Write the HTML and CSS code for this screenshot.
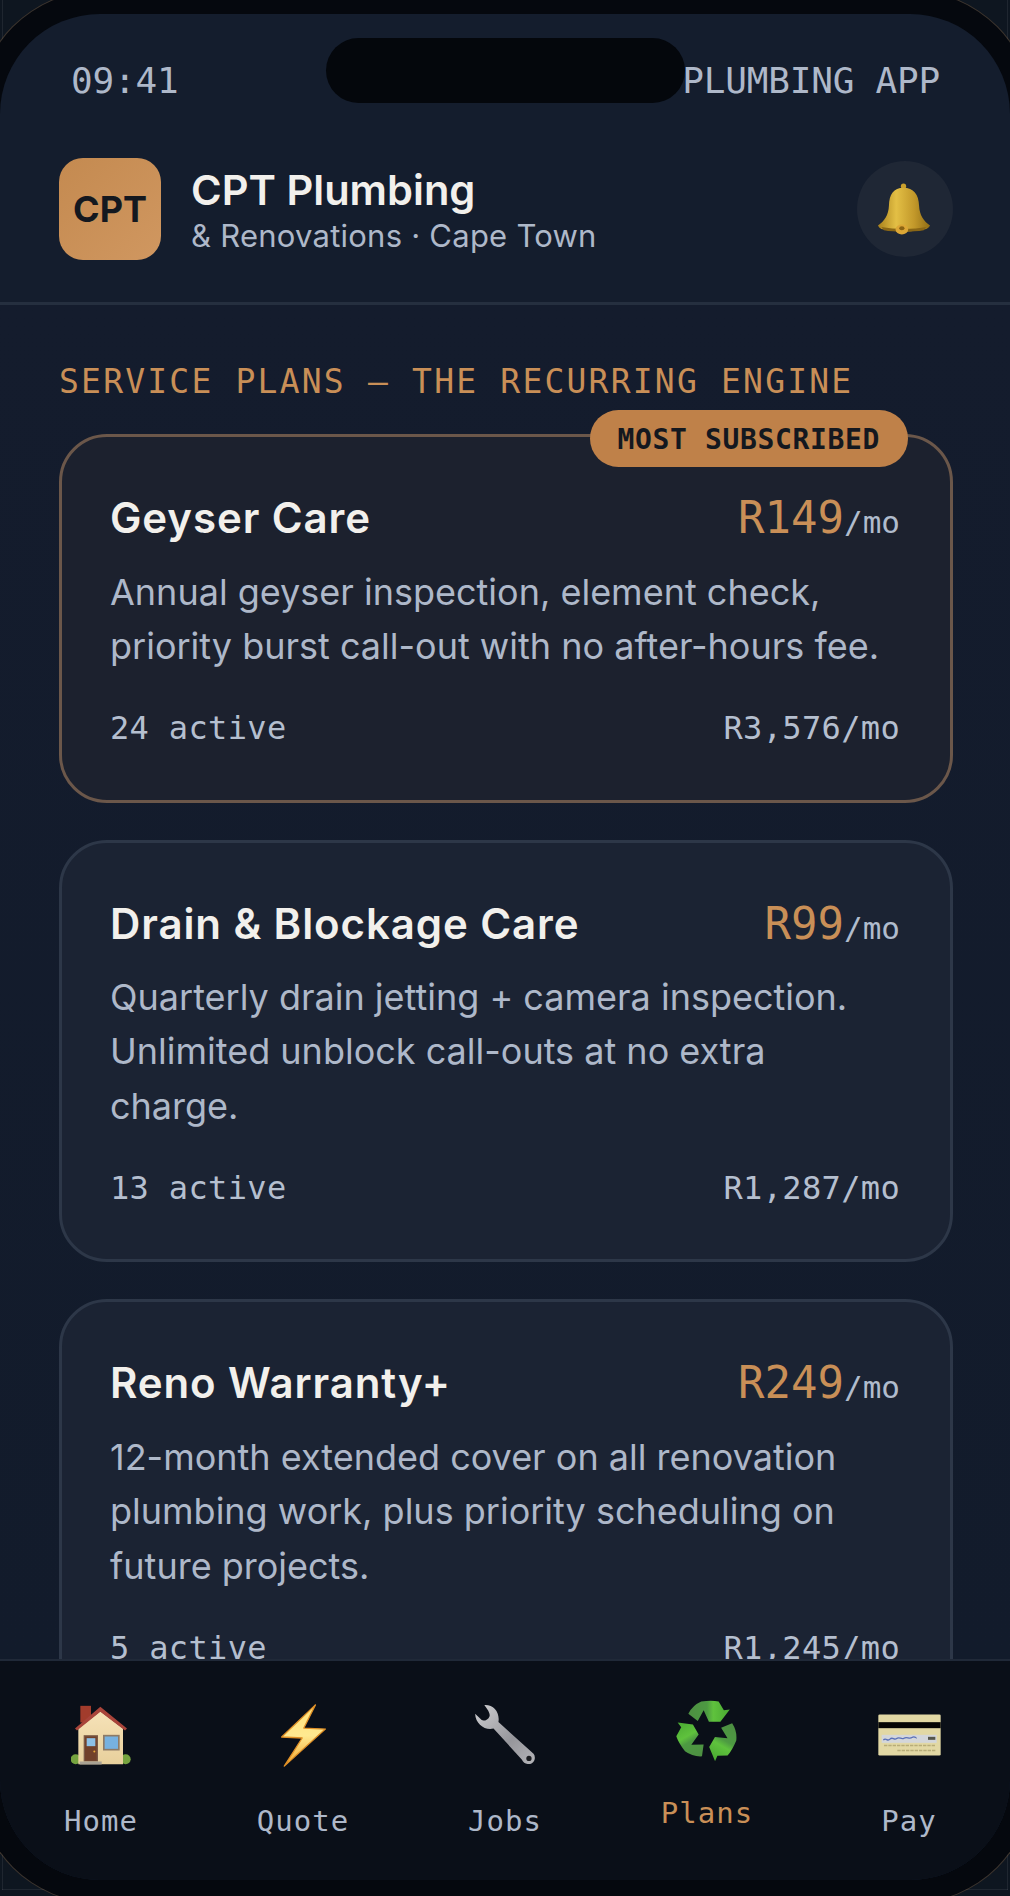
FILE: index.html
```html
<!DOCTYPE html>
<html lang="en">
<head>
    <meta charset="UTF-8">
    <meta name="viewport" content="width=device-width, initial-scale=1.0">
    <title>CPT Plumbing - Service Plans</title>
    <link rel="stylesheet" href="styles.css">
</head>
<body>
    <div class="phone">
        <div class="screen">
            <div class="island"></div>
            <div class="status-bar">
                <span>09:41</span>
                <span>PLUMBING APP</span>
            </div>
            <header class="app-header">
                <div class="logo">CPT</div>
                <div class="brand">
                    <div class="brand-name">CPT Plumbing</div>
                    <div class="brand-sub">&amp; Renovations · Cape Town</div>
                </div>
                <div class="bell">
                    <svg width="58" height="55" viewBox="1112 555 175 165">
                        <defs>
                            <linearGradient id="bellGold" x1="0" y1="0" x2="1" y2="0">
                                <stop offset="0" stop-color="#a9811c"/>
                                <stop offset="0.35" stop-color="#e3bf45"/>
                                <stop offset="0.7" stop-color="#c2982a"/>
                                <stop offset="1" stop-color="#8f6c15"/>
                            </linearGradient>
                        </defs>
                        <circle cx="1195" cy="567" r="8" fill="#c9a02d"/>
                        <path d="M1195 572c-30 0-43 20-44 54-1 28-14 46-33 60 3 6 6 8 10 10 40 10 98 10 136 0 5-2 9-5 11-10-19-14-32-32-33-60-1-34-17-54-47-54z" fill="url(#bellGold)"/>
                        <path d="M1128 690c40 8 98 8 136 0l-8 10c-34 6-88 6-120 0z" fill="#8a6716"/>
                        <ellipse cx="1190" cy="698" rx="19" ry="15" fill="#dca736"/>
                        <ellipse cx="1190" cy="694" rx="8" ry="6" fill="#8a6414"/>
                    </svg>
                </div>
            </header>
            <main class="plans">
                <h2 class="section-label">SERVICE PLANS — THE RECURRING ENGINE</h2>
                <article class="plan plan-featured">
                    <span class="plan-badge">MOST SUBSCRIBED</span>
                    <div class="plan-top">
                        <h3 class="plan-name">Geyser Care</h3>
                        <div class="plan-price">R149<small>/mo</small></div>
                    </div>
                    <p class="plan-desc">Annual geyser inspection, element check, priority burst call-out with no after-hours fee.</p>
                    <div class="plan-meta">
                        <span>24 active</span>
                        <span>R3,576/mo</span>
                    </div>
                </article>
                <article class="plan">
                    <div class="plan-top">
                        <h3 class="plan-name">Drain &amp; Blockage Care</h3>
                        <div class="plan-price">R99<small>/mo</small></div>
                    </div>
                    <p class="plan-desc">Quarterly drain jetting + camera inspection. Unlimited unblock call-outs at no extra charge.</p>
                    <div class="plan-meta">
                        <span>13 active</span>
                        <span>R1,287/mo</span>
                    </div>
                </article>
                <article class="plan">
                    <div class="plan-top">
                        <h3 class="plan-name">Reno Warranty+</h3>
                        <div class="plan-price">R249<small>/mo</small></div>
                    </div>
                    <p class="plan-desc">12-month extended cover on all renovation plumbing work, plus priority scheduling on future projects.</p>
                    <div class="plan-meta">
                        <span>5 active</span>
                        <span>R1,245/mo</span>
                    </div>
                </article>
            </main>
            <nav class="tab-bar">
                <div class="tab">
                    <div class="tab-icon">
                        <svg width="60" height="62" viewBox="30 45 180 185">
                            <defs>
                                <linearGradient id="wall" x1="0" y1="0" x2="0" y2="1">
                                    <stop offset="0" stop-color="#f6e2b8"/>
                                    <stop offset="1" stop-color="#e8d09c"/>
                                </linearGradient>
                            </defs>
                            <rect x="58" y="50" width="32" height="50" fill="#a23c2c"/>
                            <circle cx="44" cy="210" r="15" fill="#76a33f"/>
                            <circle cx="194" cy="210" r="15" fill="#76a33f"/>
                            <path d="M52 118 118 66 186 118V225H52z" fill="url(#wall)"/>
                            <path d="M42 118 118 53 198 118 192 124 118 68 48 124z" fill="#a9443a"/>
                            <rect x="68" y="138" width="43" height="79" fill="#7b5a46"/>
                            <rect x="72" y="142" width="35" height="73" fill="#71402a"/>
                            <rect x="77" y="147" width="26" height="24" fill="#8dc0e6"/>
                            <circle cx="100" cy="187" r="3" fill="#e9a93c"/>
                            <rect x="126" y="137" width="50" height="47" fill="#8d7a66"/>
                            <rect x="131" y="142" width="40" height="37" fill="#77b1e0"/>
                            <rect x="56" y="217" width="66" height="9" fill="#a9a294"/>
                        </svg>
                    </div>
                    <span class="tab-label">Home</span>
                </div>
                <div class="tab">
                    <div class="tab-icon">
                        <svg width="48" height="65" viewBox="835 190 145 195">
                            <defs>
                                <linearGradient id="bolt" x1="0" y1="0" x2="0" y2="1">
                                    <stop offset="0" stop-color="#ffe27a"/>
                                    <stop offset="0.5" stop-color="#ffe990"/>
                                    <stop offset="1" stop-color="#f2a62c"/>
                                </linearGradient>
                            </defs>
                            <path d="M945 195 843 292 905 295 851 380 975 268 910 265z" fill="url(#bolt)" stroke="#df8f26" stroke-width="4" stroke-linejoin="round"/>
                        </svg>
                    </div>
                    <span class="tab-label">Quote</span>
                </div>
                <div class="tab">
                    <div class="tab-icon">
                        <svg width="66" height="64" viewBox="35 40 200 195">
                            <defs>
                                <linearGradient id="steel" x1="0" y1="0" x2="1" y2="1">
                                    <stop offset="0" stop-color="#cfcfd2"/>
                                    <stop offset="0.6" stop-color="#96969b"/>
                                    <stop offset="1" stop-color="#b4b4b8"/>
                                </linearGradient>
                            </defs>
                            <path d="M72 46C100 44 120 68 115 98L222 195C232 208 222 228 204 226 196 225 190 220 186 212L100 118C75 125 45 105 44 73L64 92C70 96 84 92 88 80 90 72 84 62 72 46z" fill="url(#steel)"/>
                            <circle cx="208" cy="209" r="8" fill="#1b1c20"/>
                        </svg>
                    </div>
                    <span class="tab-label">Jobs</span>
                </div>
                <div class="tab tab-active">
                    <div class="tab-icon">
                        <svg width="65" height="62" viewBox="515 180 186 178">
                            <defs>
                                <linearGradient id="recycle" x1="0" y1="0" x2="1" y2="0">
                                    <stop offset="0" stop-color="#4d8f42"/>
                                    <stop offset="0.45" stop-color="#4d9a42"/>
                                    <stop offset="0.6" stop-color="#5fc23d"/>
                                    <stop offset="1" stop-color="#49a932"/>
                                </linearGradient>
                                <path id="arrow" d="M553 222Q565 198 590 187 620 183 640 187L655 212 672 210 645 245 612 245 597 212 580 243z" fill="url(#recycle)"/>
                            </defs>
                            <use href="#arrow"/>
                            <use href="#arrow" transform="rotate(120 608 272)"/>
                            <use href="#arrow" transform="rotate(240 608 272)"/>
                        </svg>
                    </div>
                    <span class="tab-label">Plans</span>
                </div>
                <div class="tab">
                    <div class="tab-icon">
                        <svg width="63" height="42" viewBox="1122 224 189 125">
                            <rect x="1123" y="225" width="187" height="123" rx="4" fill="#e2d8a4"/>
                            <rect x="1123" y="248" width="187" height="18" fill="#050505"/>
                            <rect x="1133" y="286" width="165" height="24" fill="#d3d6da"/>
                            <path d="M1138 302c8-10 12 6 20-3s12 5 20-2 14 5 22-1 16 4 24-2 12 3 14 1" fill="none" stroke="#5a70b8" stroke-width="4"/>
                            <rect x="1272" y="292" width="22" height="9" fill="#55554a"/>
                            <path d="M1140 318h155M1180 333h115" stroke="#b8ad78" stroke-width="5" stroke-dasharray="10 3"/>
                        </svg>
                    </div>
                    <span class="tab-label">Pay</span>
                </div>
            </nav>
        </div>
    </div>
</body>
</html>
```

FILE: styles.css
```css
* {
    box-sizing: border-box;
}
html {
    height: 100vh;
    overflow: hidden;
    background:
        linear-gradient(rgba(255, 255, 255, 0.07), rgba(255, 255, 255, 0.07)) 2px 0 / 1px 1890px no-repeat,
        linear-gradient(rgba(255, 255, 255, 0.07), rgba(255, 255, 255, 0.07)) 1007px 0 / 1px 1890px no-repeat,
        linear-gradient(rgba(255, 255, 255, 0.07), rgba(255, 255, 255, 0.07)) 2px 1889px / 1006px 1px no-repeat,
        #0e1620;
}
body {
    margin: 0;
    padding-top: 1px;
    font-family: "Inter", "Noto Sans", sans-serif;
}
.phone {
    width: 1056px;
    height: 1912px;
    margin: -10px 0 0 -23px;
    padding: 23px;
    border-radius: 123px;
    background: #05080e;
    box-shadow: 0 0 0 1px rgba(201, 143, 87, 0.25);
}
.screen {
    position: relative;
    height: 100%;
    display: flex;
    flex-direction: column;
    border-radius: 100px;
    overflow: hidden;
    background: #141d2d;
}
.island {
    position: absolute;
    top: 24px;
    left: 326px;
    width: 359px;
    height: 65px;
    border-radius: 33px;
    background: #04070c;
}
.status-bar {
    display: flex;
    justify-content: space-between;
    padding: 47px 70px 0 71px;
    height: 111px;
    font-family: "DejaVu Sans Mono", monospace;
    font-size: 36px;
    line-height: 40px;
    letter-spacing: -0.2px;
    color: #aeb8c9;
}
.app-header {
    display: flex;
    align-items: center;
    gap: 30px;
    padding: 33px 57px 42px 59px;
    border-bottom: 3px solid #252f3f;
}
.logo {
    width: 102px;
    height: 102px;
    display: flex;
    align-items: center;
    justify-content: center;
    border-radius: 24px;
    background: linear-gradient(135deg, #c48a50, #d09760);
    color: #14181f;
    font-size: 36px;
    font-weight: 700;
}
.brand {
    flex: 1;
    padding-top: 2px;
}
.brand-name {
    font-size: 41.6px;
    line-height: 51px;
    font-weight: 600;
    color: #f2f0ec;
}
.brand-sub {
    font-size: 31px;
    line-height: 40px;
    letter-spacing: 0.24px;
    color: #aeb8c9;
}
.bell {
    width: 96px;
    height: 96px;
    display: flex;
    align-items: center;
    justify-content: center;
    border-radius: 50%;
    background: #1f2735;
}
.plans {
    flex: 1;
    min-height: 0;
    overflow: hidden;
    padding: 58px 57px 0 59px;
    background: linear-gradient(#141c2d, #121b2b);
}
.section-label {
    margin: 0 0 33px;
    font-family: "DejaVu Sans Mono", monospace;
    font-size: 33px;
    line-height: 38px;
    font-weight: 400;
    letter-spacing: 2.2px;
    color: #c98f57;
}
.plan {
    position: relative;
    margin-bottom: 37px;
    padding: 54px 50px 51.5px 48px;
    border: 3px solid #2d3748;
    border-radius: 48px;
    background: #1b2333;
}
.plan-featured {
    border-color: #6b574a;
    background: #1c212e;
}
.plan-badge {
    position: absolute;
    top: -27px;
    right: 42px;
    padding: 2px 28px 0 27px;
    height: 57px;
    display: flex;
    align-items: center;
    border-radius: 29px;
    background: #bf8149;
    color: #14181f;
    font-family: "DejaVu Sans Mono", monospace;
    font-size: 28px;
    font-weight: 700;
    letter-spacing: 0.65px;
}
.plan-top {
    display: flex;
    justify-content: space-between;
    align-items: baseline;
    height: 52.5px;
}
.plan-name {
    margin: 0;
    font-size: 42px;
    line-height: 53px;
    font-weight: 600;
    letter-spacing: 0.9px;
    color: #f2f0ec;
}
.plan-price {
    font-family: "DejaVu Sans Mono", monospace;
    font-size: 44px;
    color: #c98f57;
}
.plan-price small {
    font-size: 31px;
    color: #b0bccd;
}
.plan-desc {
    margin: 21px 0 35px;
    font-size: 36px;
    line-height: 54.3px;
    color: #aeb8c9;
}
.plan-meta {
    display: flex;
    justify-content: space-between;
    font-family: "DejaVu Sans Mono", monospace;
    font-size: 32px;
    line-height: 40px;
    letter-spacing: 0.35px;
    color: #b5bfcf;
}
.tab-bar {
    display: flex;
    height: 221px;
    padding-top: 39px;
    border-top: 2px solid #202938;
    background: #0a0f18;
}
.tab {
    flex: 1;
    display: flex;
    flex-direction: column;
    align-items: center;
}
.tab-icon {
    height: 70px;
    display: flex;
    align-items: center;
    justify-content: center;
}
.tab-label {
    margin-top: 31px;
    font-family: "DejaVu Sans Mono", monospace;
    font-size: 29px;
    line-height: 40px;
    letter-spacing: 1px;
    color: #aeb8c9;
}
.tab-active .tab-icon svg {
    margin-bottom: 10px;
}
.tab-active .tab-label {
    margin-top: 23px;
    color: #c98f57;
}
```
